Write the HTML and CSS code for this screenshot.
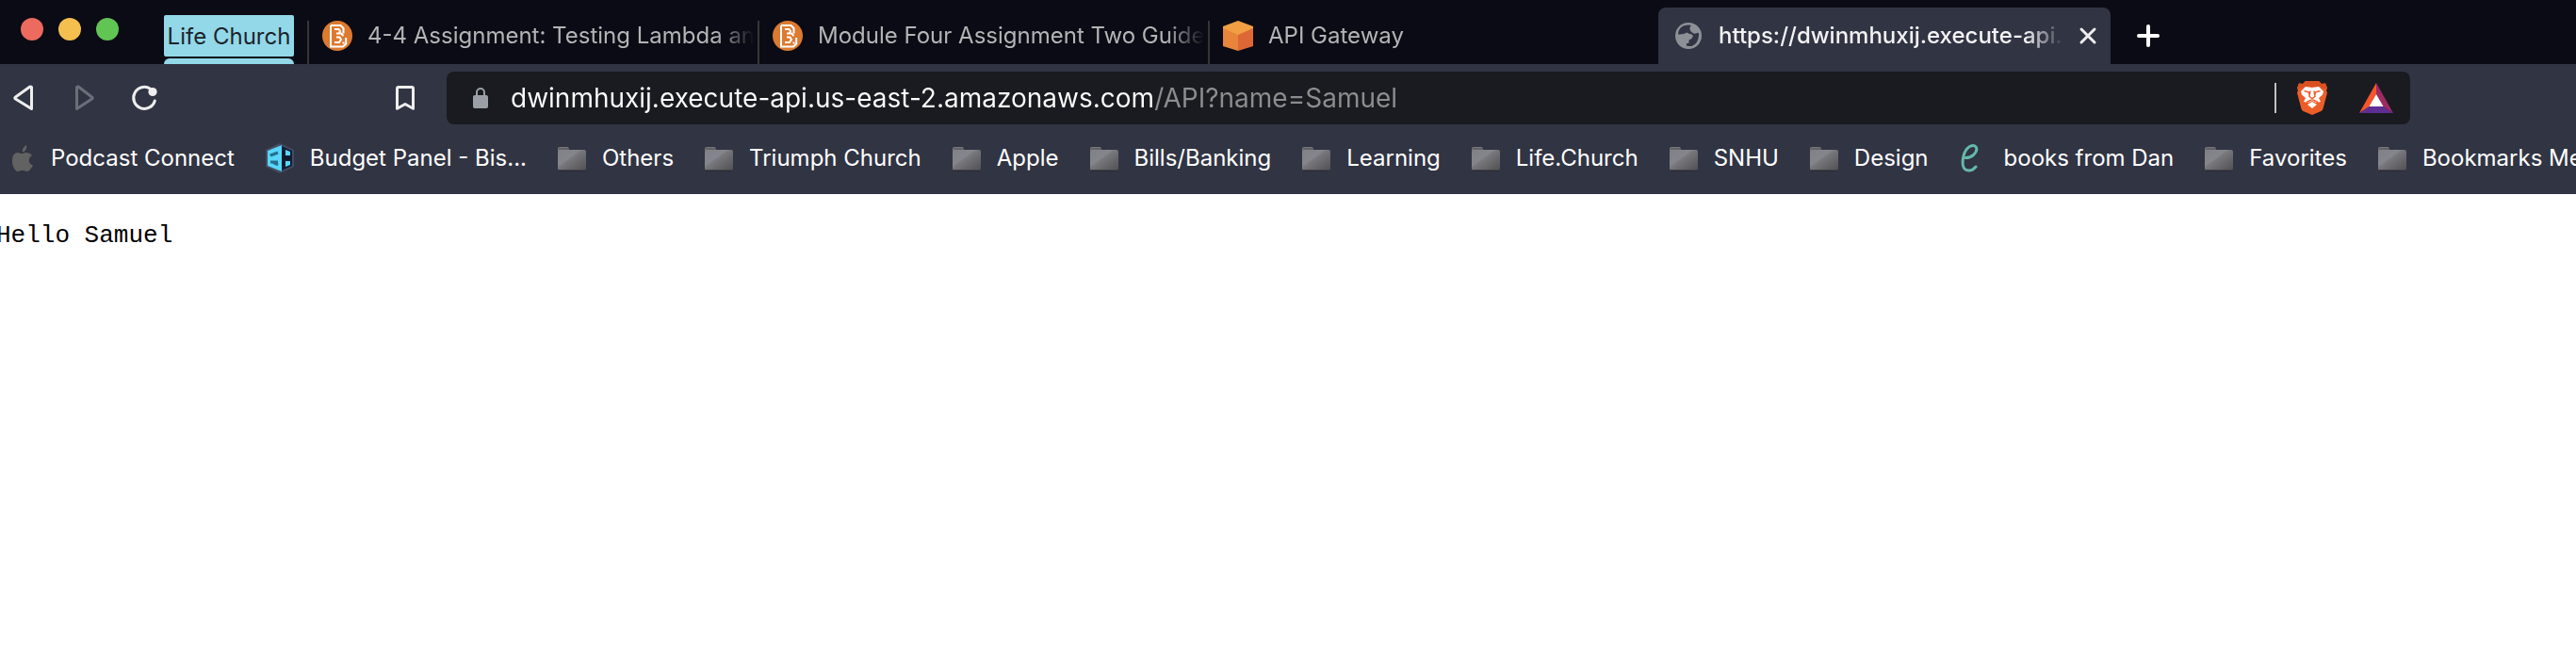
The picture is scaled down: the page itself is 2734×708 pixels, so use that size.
FILE: index.html
```html
<!DOCTYPE html>
<html lang="en">
<head>
<meta charset="utf-8">
<title>Browser window</title>
<link rel="stylesheet" href="styles.css">
</head>
<body>
<svg class="defs" aria-hidden="true">
  <defs>
    <linearGradient id="folder-face" x1="0" y1="0" x2="1" y2="1">
      <stop offset="0" stop-color="#808086"/>
      <stop offset=".38" stop-color="#85858d"/>
      <stop offset=".45" stop-color="#77777c"/>
      <stop offset="1" stop-color="#505052"/>
    </linearGradient>
    <symbol id="folder" viewBox="0 0 32 32">
      <path d="M1 8V5.500q0-1.500 2-1.500h8q1.500 0 2 1.500V8z" fill="#77777b"/>
      <path d="M2 6h11" stroke="#4f4f52"/>
      <rect x="1" y="8" width="30" height="22" rx="2" fill="#252733" opacity=".6"/>
      <rect x="1" y="7" width="30" height="22" rx="2" fill="url(#folder-face)"/>
      <path d="M2 28.500h28" stroke="#444446"/>
    </symbol>
    <symbol id="brightspace" viewBox="0 0 32 32">
      <circle cx="16" cy="16" r="16" fill="#dc7a30"/>
      <path d="M9 5h10.500l3 3v5.500M9 5v22.500h13l3.200-3V18M13 9h4.500l1.500 2-1.500 2.500H15M15 13.500h5l2.500 2.500M15 17.500h3.500l1.500 2.500-2 3h-5M22.500 22.500v2" fill="none" stroke="#fff" stroke-width="2"/>
    </symbol>
  </defs>
</svg>

<header class="browser">
  <div class="tab-strip">
    <div class="lights">
      <button class="light light-close" aria-label="Close window"></button>
      <button class="light light-min" aria-label="Minimize window"></button>
      <button class="light light-max" aria-label="Zoom window"></button>
    </div>
    <div class="group"><button class="group-name">Life Church</button></div>
    <nav class="tabs" aria-label="Tabs">
      <button class="tab">
        <svg class="icon"><use href="#brightspace"/></svg>
        <span class="tab-title">4-4 Assignment: Testing Lambda and</span>
      </button>
      <button class="tab">
        <svg class="icon"><use href="#brightspace"/></svg>
        <span class="tab-title">Module Four Assignment Two Guide</span>
      </button>
      <button class="tab">
        <svg class="icon" viewBox="0 0 32 32">
          <path d="M16 0l16 6v3l-16 7L0 9V6z" fill="#f19f42"/>
          <path d="M0 8l16 7v17L0 27z" fill="#e8853a"/>
          <path d="M32 8l-16 7v17l16-5z" fill="#dd6735"/>
        </svg>
        <span class="tab-title">API Gateway</span>
      </button>
      <div class="tab tab-active">
        <svg class="icon" viewBox="0 0 32 32">
          <circle cx="16" cy="16" r="14" fill="#8d9197"/>
          <path d="M5 14.500Q5.500 6 13.500 4.700q4.500-.7 5.500.3-2 1.500-1.500 4 .3 2.500 2.500 3.500 1 1.500 4 1 3.500-2.500 3 2.500-.8 8.500-7.500 11h-5l-1-2.500 3-1v-3l3-1.500 1.500-3q-1-2-4-2l-2.500-1.500q-4 2.500-9.500 2z" fill="#313443"/>
        </svg>
        <button class="tab-title">https://dwinmhuxij.execute-api.</button>
        <button class="tab-close" aria-label="Close tab">
          <svg viewBox="0 0 20 20"><path d="M3 3l14 14M17 3L3 17" fill="none" stroke="#eee" stroke-width="3" stroke-linecap="round"/></svg>
        </button>
      </div>
    </nav>
    <button class="new-tab" aria-label="New tab">
      <svg viewBox="0 0 24 24"><path d="M12 2v20M2 12h20" fill="none" stroke="#fff" stroke-width="4" stroke-linecap="round"/></svg>
    </button>
  </div>

  <div class="toolbar">
    <div class="nav-buttons">
      <button class="tool" aria-label="Back">
        <svg viewBox="0 0 32 32"><path d="M24.500 4.500v23L7.500 17q-1.500-1 0-2L22.500 4.300q2-.6 2 .7z" fill="none" stroke="#eee" stroke-width="3" stroke-linejoin="round"/></svg>
      </button>
      <button class="tool" aria-label="Forward">
        <svg viewBox="0 0 32 32"><path d="M8.500 4.500v23L24.500 17q1.500-1 0-2L10.500 4.300q-2-.6-2 .7z" fill="none" stroke="#6c6e78" stroke-width="3" stroke-linejoin="round"/></svg>
      </button>
      <button class="tool" aria-label="Reload">
        <svg viewBox="0 0 32 32"><path d="M22.500 6.200A11.500 11.500 0 1 0 27.300 19" fill="none" stroke="#eee" stroke-width="3" stroke-linecap="round"/><circle cx="25" cy="9.500" r="4.600" fill="#eee"/></svg>
      </button>
    </div>
    <button class="tool" aria-label="Bookmark this tab">
      <svg viewBox="0 0 32 32"><path d="M7.500 27V6q0-1.500 1.500-1.500h14q1.500 0 1.500 1.500v21.300L16 22.500 7.500 27.300z" fill="none" stroke="#eee" stroke-width="3" stroke-linejoin="round"/></svg>
    </button>
    <div class="address">
      <svg class="lock" viewBox="0 0 16 22"><rect y="8" width="16" height="14" rx="2" fill="#9aa0a6"/><path d="M4 9V5a4 4 0 0 1 8 0v4" fill="none" stroke="#9aa0a6" stroke-width="2"/></svg>
      <input class="url" type="text" aria-label="Address" value="dwinmhuxij.execute-api.us-east-2.amazonaws.com/API?name=Samuel" spellcheck="false">
      <span class="divider"></span>
      <button class="badge" aria-label="Brave Shields">
        <svg viewBox="0 0 36 36">
          <path d="M11 0h14l3 3 4-.5 2 5-1 2.500 1 2.500-4.500 17q-.5 1.500-2 2.500L18 36l-9.500-4q-1.500-1-2-2.500L2 12.500 3 10 2 7.500l2-5L8 3z" fill="#ed5d2a"/>
          <path d="M11 0h14l3 3 4-.5 2 5-3 1-6-3-7 1-7-1-6 3-3-1 2-5L8 3z" fill="#dc5020"/>
          <path d="M11 6l7 1 7-1 5 5-1 3.500-4 3.500 2 4-5 1-4-2-4 2-5-1 2-4-4-3.500L6 11z" fill="#fff"/>
          <path d="M13 25l5-3 5 3-5 4z" fill="#fff"/>
          <path d="M9.500 10.500l5.500 1.500-.5 2.500M26.500 10.500L21 12l.5 2.500M16 10.500l-1 6 3 2 3-2-1-6M12 22.500l6-3 6 3" fill="none" stroke="#ed5d2a" stroke-width="1.500"/>
        </svg>
      </button>
      <button class="badge" aria-label="Brave Rewards">
        <svg viewBox="0 0 36 36">
          <path d="M18 2L0 34l11-7 7-13z" fill="#f6552c"/>
          <path d="M18 2l18 32-11-7-7-13z" fill="#9e2a63"/>
          <path d="M0 34h36l-11-7H11z" fill="#5f2e94"/>
          <path d="M18 14l7.500 13h-15z" fill="#fff"/>
        </svg>
      </button>
    </div>
  </div>

  <nav class="bookmarks" aria-label="Bookmarks">
    <a class="bookmark" href="#">
      <svg class="icon" viewBox="0 0 32 32"><path d="M22 2q1 4-2.500 7h-2Q18 4 22 2zM12 10q2 0 5 1.200 3-1.700 6-1.200 3.500.5 5 3-3.500 2.500-3.200 5.500.2 3.500 4.200 5-2 4-4.500 6-2 1-4-.2-2.500-1-5 0-3 1.200-4.500 0Q7.500 26 7 20q-.5-9 5-10z" fill="#626262"/></svg>
      <span>Podcast Connect</span>
    </a>
    <a class="bookmark" href="#">
      <svg class="icon" viewBox="0 0 32 32">
        <path d="M16 0l15 7v18l-15 7L1 25V7z" fill="#464c60"/>
        <path d="M16 2l13 6v16l-13 6z" fill="#102038"/>
        <path d="M18 2v28L3 24V8z" fill="#59d5fa"/>
        <path d="M6 13l8-3M7 13v-2M6 20h8M8 20l6 3" fill="none" stroke="#23708f" stroke-width="3"/>
        <path d="M18 9h3v14h-3zM18 14h9v4h-9z" fill="#0c1a2e"/>
        <path d="M22 7l5 2v4h-5zM22 19h5v4l-5 2z" fill="#59d5fa"/>
      </svg>
      <span>Budget Panel - Bis...</span>
    </a>
    <a class="bookmark" href="#"><svg class="icon"><use href="#folder"/></svg><span>Others</span></a>
    <a class="bookmark" href="#"><svg class="icon"><use href="#folder"/></svg><span>Triumph Church</span></a>
    <a class="bookmark" href="#"><svg class="icon"><use href="#folder"/></svg><span>Apple</span></a>
    <a class="bookmark" href="#"><svg class="icon"><use href="#folder"/></svg><span>Bills/Banking</span></a>
    <a class="bookmark" href="#"><svg class="icon"><use href="#folder"/></svg><span>Learning</span></a>
    <a class="bookmark" href="#"><svg class="icon"><use href="#folder"/></svg><span>Life.Church</span></a>
    <a class="bookmark" href="#"><svg class="icon"><use href="#folder"/></svg><span>SNHU</span></a>
    <a class="bookmark" href="#"><svg class="icon"><use href="#folder"/></svg><span>Design</span></a>
    <a class="bookmark" href="#">
      <svg class="icon" viewBox="0 0 32 32"><path d="M7 15.500q5 0 8.500-3Q20 8 18.500 4.500 16.500 1 11.500 3.500 6 7 4.500 15.500q-1.500 10 2.500 12.500 6 3 11-3" fill="none" stroke="#64b9a9" stroke-width="3" stroke-linecap="round"/></svg>
      <span>books from Dan</span>
    </a>
    <a class="bookmark" href="#"><svg class="icon"><use href="#folder"/></svg><span>Favorites</span></a>
    <a class="bookmark" href="#"><svg class="icon"><use href="#folder"/></svg><span>Bookmarks Me</span></a>
  </nav>
</header>

<main class="page">
  <pre class="response">Hello Samuel</pre>
</main>
</body>
</html>
```

FILE: styles.css
```css
* { box-sizing: border-box; }

body {
  margin: 0;
  background: #fff;
  font-family: Inter, "Liberation Sans", sans-serif;
  font-size: 24px;
  overflow-x: hidden;
}

button {
  margin: 0;
  padding: 0;
  border: 0;
  background: none;
  color: inherit;
  font: inherit;
  text-align: left;
}

svg { display: block; flex: none; }

.defs { position: absolute; width: 0; height: 0; }

.icon { width: 32px; height: 32px; }

.browser { background: #313443; color: #fff; }

/* Tab strip */
.tab-strip {
  display: flex;
  align-items: flex-end;
  height: 68px;
  padding-left: 22px;
  background: #0b0b15;
}

.lights {
  display: flex;
  gap: 16px;
  padding-bottom: 25px;
}

.light { width: 24px; height: 24px; border-radius: 50%; }
.light-close { background: #ed6a5e; }
.light-min { background: #f5bf4f; }
.light-max { background: #61c554; }

.group {
  margin: 0 14px 0 48px;
  flex: none;
}

.group::after {
  content: "";
  display: block;
  height: 6px;
  margin-top: 2px;
  border-radius: 6px 6px 0 0;
  background: #92d8e9;
}

.group-name {
  display: block;
  width: 138px;
  height: 44px;
  border-radius: 2px;
  background: #92d8e9;
  color: #1c2429;
  text-align: center;
  white-space: nowrap;
}

.tabs { display: flex; min-width: 0; }

.tab {
  display: flex;
  align-items: center;
  gap: 16px;
  flex: 0 1 478px;
  width: 478px;
  min-width: 0;
  height: 60px;
  padding: 0 4px 0 14px;
  color: #b4b4b6;
}

.tab:not(.tab-active) {
  height: 46px;
  align-self: flex-end;
  padding-bottom: 14px;
  border-left: 2px solid #363636;
}

.tab-title {
  flex: 1;
  min-width: 0;
  overflow: hidden;
  white-space: nowrap;
  line-height: 32px;
  mask-image: linear-gradient(to left, transparent, #000 40px);
}

.tab-active {
  flex-basis: 480px;
  width: 480px;
  padding: 0 14px 0 16px;
  border-radius: 8px 8px 0 0;
  background: #313443;
  color: #f3f3f4;
  font-weight: 500;
}

.tab-close svg { width: 20px; height: 20px; }

.new-tab { margin: 0 28px 18px; flex: none; }
.new-tab svg { width: 24px; height: 24px; }

/* Toolbar */
.toolbar {
  display: flex;
  align-items: center;
  gap: 28px;
  padding: 8px 176px 6px 9px;
}

.nav-buttons {
  display: flex;
  gap: 32px;
  margin-right: 217px;
}

.tool svg { width: 32px; height: 32px; }

.address {
  display: flex;
  align-items: center;
  flex: 1;
  min-width: 0;
  height: 56px;
  padding: 0 18px 0 28px;
  border-radius: 8px;
  background: #1a1b20;
}

.lock { width: 16px; height: 22px; }

/* The host is white and the path after it is grey. */
.url {
  flex: 1;
  min-width: 0;
  height: 40px;
  margin-left: 24px;
  padding: 0;
  border: 0;
  outline: 0;
  color: #fff;
  font: 400 28px/40px Inter, "Liberation Sans", sans-serif;
  background: linear-gradient(to right, #fff 683px, #8d8d90 683px);
  background-clip: text;
  -webkit-text-fill-color: transparent;
}

.divider { width: 2px; height: 32px; margin-right: 20px; background: #c0c0c2; }

.badge svg { width: 36px; height: 36px; }
.badge + .badge { margin-left: 32px; }

/* Bookmarks */
.bookmarks {
  display: flex;
  gap: 32px;
  padding: 14px 0 22px 6px;
  overflow: hidden;
}

.bookmark {
  display: flex;
  align-items: center;
  gap: 16px;
  flex: none;
  color: inherit;
  line-height: 32px;
  text-decoration: none;
  white-space: nowrap;
}

/* Page */
.page { overflow: hidden; }

.response {
  margin: 28px 0 0 -4px;
  font: 26px/32px "Liberation Mono", monospace;
  color: #000;
}
```
